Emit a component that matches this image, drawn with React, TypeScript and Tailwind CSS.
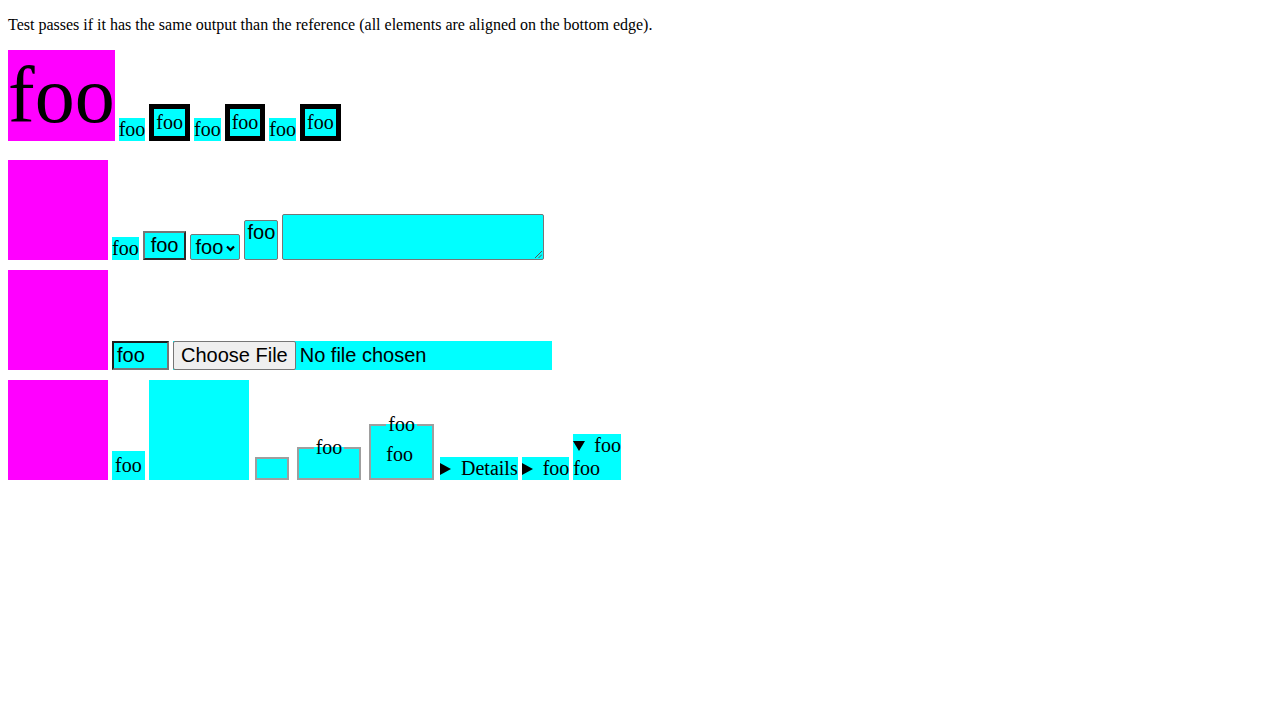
import React from 'react';

const serif = "font-['Liberation_Serif','Times_New_Roman',serif]";
const sans = "font-['Liberation_Sans',Arial,sans-serif]";

const Magenta = () => <div className="w-[100px] h-[100px] bg-[#ff00ff] shrink-0" />;

const Tri = ({ down = false }: { down?: boolean }) =>
  down ? (
    <svg width="12" height="10" viewBox="0 0 12 10" className="shrink-0">
      <path d="M0 0 L12 0 L6 10 Z" fill="#000" />
    </svg>
  ) : (
    <svg width="11" height="12" viewBox="0 0 11 12" className="shrink-0">
      <path d="M0 0 L11 6 L0 12 Z" fill="#000" />
    </svg>
  );

const Fieldset = ({ legend, children }: { legend: string; children?: React.ReactNode }) => (
  <div className="mx-[2px] flex flex-col">
    <div className="flex items-stretch h-[23px]">
      <div className="w-[17px] shrink-0 mt-[11px] border-t-2 border-l-2 border-[#9e9e9e] bg-[#00ffff]" />
      <div className="shrink-0 px-[2px] leading-[23px] bg-[linear-gradient(#fff_0_11px,#0ff_11px)]">{legend}</div>
      <div className="flex-1 min-w-[17px] mt-[11px] border-t-2 border-r-2 border-[#9e9e9e] bg-[#00ffff]" />
    </div>
    <div className="border-2 border-t-0 border-[#9e9e9e] bg-[#00ffff] px-[15px] pb-[12.5px] pt-[7px] leading-[23px]">
      {children}
    </div>
  </div>
);

export default function App() {
  return (
    <div className={`${serif} text-black px-2 pt-4 text-[16px]`}>
      <p className="leading-[18px]">
        Test passes if it has the same output than the reference (all elements are aligned on the bottom edge).
      </p>

      {/* row 1 */}
      <div className="mt-4 flex items-end gap-1">
        <span className="bg-[#ff00ff] text-[80px] leading-[91px]">foo</span>
        <span className="bg-[#00ffff] text-[20px] leading-[23px]">foo</span>
        <span className="border-[5px] border-black bg-[#00ffff] p-[2px] text-[20px] leading-[23px]">foo</span>
        <span className="bg-[#00ffff] text-[20px] leading-[23px]">foo</span>
        <span className="border-[5px] border-black bg-[#00ffff] p-[2px] text-[20px] leading-[23px]">foo</span>
        <span className="bg-[#00ffff] text-[20px] leading-[23px]">foo</span>
        <span className="border-[5px] border-black bg-[#00ffff] p-[2px] text-[20px] leading-[23px]">foo</span>
      </div>

      {/* row 2 */}
      <div className="mt-[19px] flex items-end gap-1">
        <Magenta />
        <span className="bg-[#00ffff] text-[20px] leading-[23px]">foo</span>
        <span
          className={`${sans} bg-[#00ffff] text-[20px] leading-[23px] px-[6px] py-[1px] border-2 border-t-[#767676] border-l-[#767676] border-b-[#2b2b2b] border-r-[#2b2b2b]`}
        >
          foo
        </span>
        <div
          className={`${sans} flex items-center w-[50px] h-[26px] bg-[#00ffff] border border-[#767676] rounded-[2px] pl-[4px] text-[20px] leading-[23px]`}
        >
          <span>foo</span>
          <svg width="9" height="7" viewBox="0 0 9 7" className="ml-[3px] mt-[2px]">
            <path d="M1 1.5 L4.5 5 L8 1.5" stroke="#000" strokeWidth="2.2" fill="none" />
          </svg>
        </div>
        <div
          className={`${sans} w-[34px] h-[40px] bg-[#00ffff] border border-[#767676] rounded-[2px] pl-[2px] text-[20px] leading-[23px]`}
        >
          foo
        </div>
        <div className="relative w-[262px] h-[46px] bg-[#00ffff] border border-[#767676] rounded-[2px]">
          <svg width="8" height="8" viewBox="0 0 8 8" className="absolute right-[1px] bottom-[1px]">
            <path d="M1 8 L8 1 M4.5 8 L8 4.5" stroke="#555" strokeWidth="1" />
          </svg>
        </div>
      </div>

      {/* row 3 */}
      <div className="mt-[10px] flex items-end gap-1">
        <Magenta />
        <div
          className={`${sans} w-[57px] h-[29px] bg-[#00ffff] border-2 border-t-[#1f1f1f] border-l-[#1f1f1f] border-b-[#767676] border-r-[#767676] pl-[3px] text-[20px] leading-[25px]`}
        >
          foo
        </div>
        <div className={`${sans} flex items-center w-[379px] h-[29px] bg-[#00ffff] text-[20px] leading-[23px]`}>
          <span className="h-[29px] bg-[#efefef] border border-[#767676] rounded-[2px] px-[7px] py-[2px]">Choose File</span>
          <span className="ml-1">No file chosen</span>
        </div>
      </div>

      {/* row 4 */}
      <div className="mt-[10px] flex items-end gap-1 text-[20px]">
        <Magenta />
        <span className="bg-[#00ffff] p-[3px] leading-[23px]">foo</span>
        <div className="w-[100px] h-[100px] bg-[#00ffff]" />
        <div className="mx-[2px] w-[34px] h-[23.5px] border-2 border-[#9e9e9e] bg-[#00ffff]" />
        <Fieldset legend="foo" />
        <Fieldset legend="foo">foo</Fieldset>
        <div className="flex items-center bg-[#00ffff] leading-[23px]">
          <Tri />
          <span className="ml-[10px]">Details</span>
        </div>
        <div className="flex items-center bg-[#00ffff] leading-[23px]">
          <Tri />
          <span className="ml-[10px]">foo</span>
        </div>
        <div className="bg-[#00ffff] leading-[23px]">
          <div className="flex items-center">
            <Tri down />
            <span className="ml-[9px]">foo</span>
          </div>
          <div>foo</div>
        </div>
      </div>
    </div>
  );
}
